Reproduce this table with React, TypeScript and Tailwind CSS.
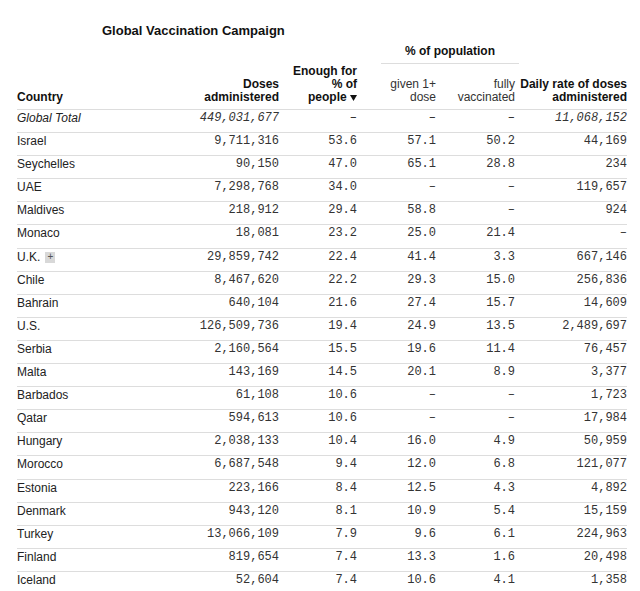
import React from "react";

type Row = {
  country: string;
  doses: string;
  enough: string;
  given: string;
  fully: string;
  daily: string;
  badge?: boolean;
  total?: boolean;
};

const rows: Row[] = [
  { country: "Global Total", doses: "449,031,677", enough: "–", given: "–", fully: "–", daily: "11,068,152", total: true },
  { country: "Israel", doses: "9,711,316", enough: "53.6", given: "57.1", fully: "50.2", daily: "44,169" },
  { country: "Seychelles", doses: "90,150", enough: "47.0", given: "65.1", fully: "28.8", daily: "234" },
  { country: "UAE", doses: "7,298,768", enough: "34.0", given: "–", fully: "–", daily: "119,657" },
  { country: "Maldives", doses: "218,912", enough: "29.4", given: "58.8", fully: "–", daily: "924" },
  { country: "Monaco", doses: "18,081", enough: "23.2", given: "25.0", fully: "21.4", daily: "–" },
  { country: "U.K.", doses: "29,859,742", enough: "22.4", given: "41.4", fully: "3.3", daily: "667,146", badge: true },
  { country: "Chile", doses: "8,467,620", enough: "22.2", given: "29.3", fully: "15.0", daily: "256,836" },
  { country: "Bahrain", doses: "640,104", enough: "21.6", given: "27.4", fully: "15.7", daily: "14,609" },
  { country: "U.S.", doses: "126,509,736", enough: "19.4", given: "24.9", fully: "13.5", daily: "2,489,697" },
  { country: "Serbia", doses: "2,160,564", enough: "15.5", given: "19.6", fully: "11.4", daily: "76,457" },
  { country: "Malta", doses: "143,169", enough: "14.5", given: "20.1", fully: "8.9", daily: "3,377" },
  { country: "Barbados", doses: "61,108", enough: "10.6", given: "–", fully: "–", daily: "1,723" },
  { country: "Qatar", doses: "594,613", enough: "10.6", given: "–", fully: "–", daily: "17,984" },
  { country: "Hungary", doses: "2,038,133", enough: "10.4", given: "16.0", fully: "4.9", daily: "50,959" },
  { country: "Morocco", doses: "6,687,548", enough: "9.4", given: "12.0", fully: "6.8", daily: "121,077" },
  { country: "Estonia", doses: "223,166", enough: "8.4", given: "12.5", fully: "4.3", daily: "4,892" },
  { country: "Denmark", doses: "943,120", enough: "8.1", given: "10.9", fully: "5.4", daily: "15,159" },
  { country: "Turkey", doses: "13,066,109", enough: "7.9", given: "9.6", fully: "6.1", daily: "224,963" },
  { country: "Finland", doses: "819,654", enough: "7.4", given: "13.3", fully: "1.6", daily: "20,498" },
  { country: "Iceland", doses: "52,604", enough: "7.4", given: "10.6", fully: "4.1", daily: "1,358" },
];

const grid = "grid grid-cols-[163px_99px_78px_79px_79px_112px]";

function Num({ children, italic }: { children: React.ReactNode; italic?: boolean }) {
  return (
    <div className={`text-right font-['Liberation_Mono',monospace] text-[#333] ${italic ? "italic" : ""}`}>
      {children}
    </div>
  );
}

export default function App() {
  return (
    <div className="h-[591px] w-[640px] overflow-hidden bg-white pl-[17px] font-['Liberation_Sans',Arial,sans-serif] text-[#222]">
      <h1 className="pl-[85px] pt-[23px] text-[13px] font-bold leading-4 text-[#111]">
        Global Vaccination Campaign
      </h1>

      {/* header */}
      <div className={`${grid} mt-[4px] w-[610px] border-b border-[#ddd] text-[12px]`}>
        <div className="col-span-2 col-start-4 ml-[24px] mr-[-4px] border-b border-[#ddd] pb-[4px] text-center font-bold leading-4 text-[#111]">
          % of population
        </div>
        <div className="col-start-1 row-start-2 flex h-[45px] items-end pb-[5px] font-bold leading-[13px] text-[#111]">
          Country
        </div>
        <div className="row-start-2 flex h-[45px] items-end justify-end pb-[5px] text-right font-bold leading-[13px] text-[#111]">
          <div>
            Doses
            <br />
            administered
          </div>
        </div>
        <div className="row-start-2 flex h-[45px] items-end justify-end pb-[5px] text-right font-bold leading-[13px] text-[#111]">
          <div>
            Enough for
            <br />% of
            <br />
            people{" "}
            <svg width="7" height="7" viewBox="0 0 7 7" className="inline-block align-baseline">
              <path d="M0 1h7L3.5 7z" fill="#111" />
            </svg>
          </div>
        </div>
        <div className="row-start-2 flex h-[45px] items-end justify-end pb-[5px] text-right leading-[13px] text-[#333]">
          <div>
            given 1+
            <br />
            dose
          </div>
        </div>
        <div className="row-start-2 flex h-[45px] items-end justify-end pb-[5px] text-right leading-[13px] text-[#333]">
          <div>
            fully
            <br />
            vaccinated
          </div>
        </div>
        <div className="row-start-2 flex h-[45px] items-end justify-end pb-[5px] text-right font-bold leading-[13px] text-[#111]">
          <div>
            Daily rate of doses
            <br />
            administered
          </div>
        </div>
      </div>

      {/* rows */}
      {rows.map((r) => (
        <div key={r.country} className={`${grid} h-[23.1px] w-[610px] border-b border-[#ddd] text-[12px] leading-4`}>
          <div className={`flex items-start gap-[5px] ${r.total ? "italic" : ""}`}>
            {r.country}
            {r.badge && (
              <span className="mt-[3px] flex h-[11px] w-[10px] items-center justify-center bg-[#d8d8d8] text-[10px] leading-none text-[#555]">
                +
              </span>
            )}
          </div>
          <Num italic={r.total}>{r.doses}</Num>
          <Num italic={r.total}>{r.enough}</Num>
          <Num italic={r.total}>{r.given}</Num>
          <Num italic={r.total}>{r.fully}</Num>
          <Num italic={r.total}>{r.daily}</Num>
        </div>
      ))}
    </div>
  );
}
